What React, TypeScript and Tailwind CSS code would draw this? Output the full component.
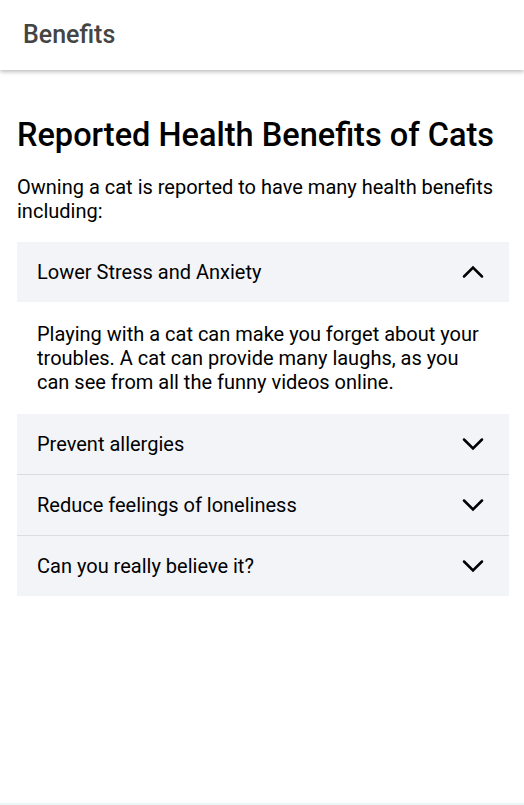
import { useState } from "react";

const items = [
  {
    title: "Lower Stress and Anxiety",
    body: "Playing with a cat can make you forget about your troubles. A cat can provide many laughs, as you can see from all the funny videos online.",
  },
  { title: "Prevent allergies", body: "Kids who grow up with cats may be less likely to develop allergies." },
  { title: "Reduce feelings of loneliness", body: "A cat is great company on a quiet evening." },
  { title: "Can you really believe it?", body: "Many owners say yes." },
];

function Chevron({ up }: { up: boolean }) {
  return (
    <svg width="24" height="24" viewBox="0 0 24 24" fill="none" stroke="currentColor" strokeWidth="2.5" strokeLinecap="round" strokeLinejoin="miter">
      {up ? <path d="M3 16.5l9-9 9 9" /> : <path d="M3 7.5l9 9 9-9" />}
    </svg>
  );
}

export default function App() {
  const [open, setOpen] = useState(0);

  return (
    <div className="min-h-screen h-[805px] flex flex-col bg-white text-black font-['Roboto','Liberation_Sans',sans-serif]">
      <header className="h-[70px] flex items-center px-[23px] bg-white shadow-[0_2px_4px_rgba(0,0,0,0.25)] z-10">
        <h1 className="text-[25px] font-medium text-[#444]">Benefits</h1>
      </header>

      <main className="flex-1 pl-[17px] pr-[15px] pt-[46px]">
        <h2 className="text-[32.5px] leading-[38px] font-medium">Reported Health Benefits of Cats</h2>
        <p className="mt-[21px] text-[20px] leading-[24px]">
          Owning a cat is reported to have many health benefits including:
        </p>

        <div className="mt-[19px]">
          {items.map((item, i) => (
            <div key={item.title} className={i > 1 ? "border-t border-[#dcdcdc]" : ""}>
              <button
                onClick={() => setOpen(open === i ? -1 : i)}
                className="w-full h-[60px] flex items-center justify-between pl-[20px] pr-[24px] bg-[#f3f4f8] text-[20px] text-left"
              >
                <span>{item.title}</span>
                <Chevron up={open === i} />
              </button>
              {open === i && (
                <div className="px-[20px] pt-[20px] pb-[20px] text-[20px] leading-[24px]">
                  {item.body}
                </div>
              )}
            </div>
          ))}
        </div>
      </main>

      <div className="h-[2px] bg-[#eaf6f6]" />
    </div>
  );
}
